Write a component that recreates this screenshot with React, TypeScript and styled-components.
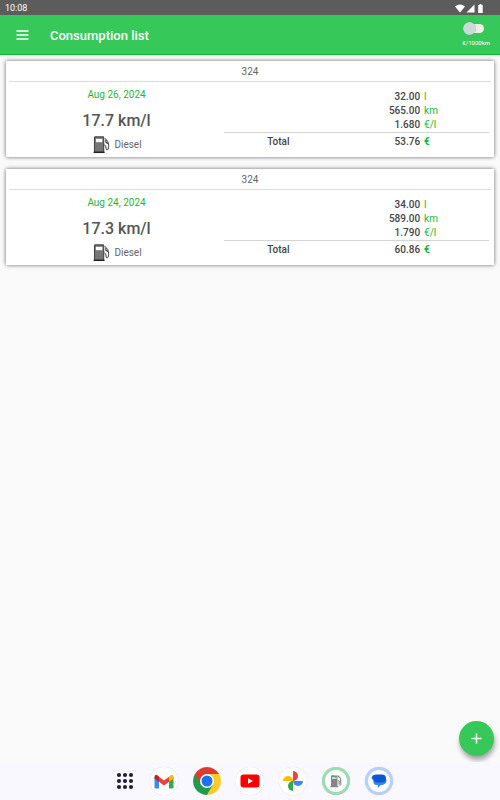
import React from "react";
import styled, { createGlobalStyle } from "styled-components";

const GlobalStyle = createGlobalStyle`
  * { box-sizing: border-box; }
  body {
    margin: 0;
    background: #fafafa;
    color: #555;
    font-family: Roboto, "Liberation Sans", sans-serif;
    font-size: 10px;
  }
`;

const Screen = styled.div`
  min-height: 100vh;
  display: flex;
  flex-direction: column;
`;

const StatusBar = styled.div`
  height: 15px;
  padding: 1px 16px 0 5px;
  display: flex;
  align-items: center;
  justify-content: space-between;
  background: #5c5c5c;
  color: #fff;
  font-size: 9px;
  line-height: 14px;
`;

const StatusIcons = styled.div`
  display: flex;
  align-items: center;
  gap: 1px;
`;

const AppBar = styled.header`
  height: 40px;
  padding: 0 10px 0 16px;
  display: flex;
  align-items: center;
  background: #36c95a;
  border-bottom: 1px solid #08bd26;
  color: #fff;
`;

const MenuButton = styled.button`
  display: flex;
  padding: 0;
  border: 0;
  background: none;
  color: inherit;
`;

const Title = styled.h1`
  flex: 1;
  margin: 0 0 0 21px;
  font-size: 13px;
  line-height: 16px;
  font-weight: 500;
  padding-top: 2px;
`;

const UnitSwitch = styled.label`
  display: flex;
  flex-direction: column;
  align-items: center;
  gap: 4px;
  font-size: 6px;
  line-height: 8px;
  padding-bottom: 1px;
`;

const SwitchInput = styled.input`
  appearance: none;
  display: flex;
  align-items: center;
  width: 18px;
  height: 9px;
  margin: 3px 2px 2px 0;
  border-radius: 5px;
  background: #eeeee6;

  &::before {
    content: "";
    flex: none;
    width: 13px;
    height: 13px;
    margin-left: -3px;
    border-radius: 50%;
    background: #c9dad8;
    box-shadow: 0 0 1px rgba(0, 0, 0, 0.3);
  }
  &:checked { justify-content: flex-end; }
`;

const Main = styled.main`
  position: relative;
  flex: 1;
  padding: 6px;
  overflow: hidden;
`;

const List = styled.div`
  display: flex;
  flex-direction: column;
  gap: 12px;
`;

const Card = styled.article`
  padding: 0 3px 3px;
  background: #fff;
  box-shadow: 0 0 4px rgba(0, 0, 0, 0.6);
`;

const CardTitle = styled.h2`
  margin: 0;
  height: 21px;
  border-bottom: 1px solid #dcdcdc;
  text-align: center;
  font-size: 10px;
  line-height: 21px;
  font-weight: 400;
  color: #666;
`;

const CardBody = styled.div`
  display: grid;
  grid-template-columns: 215fr 267fr;
`;

const Summary = styled.div`
  display: flex;
  flex-direction: column;
  align-items: center;
  padding-top: 6px;
`;

const FillDate = styled.time`
  color: #1bb92f;
  line-height: 14px;
`;

const Average = styled.strong`
  margin-top: 9px;
  font-size: 16px;
  line-height: 20px;
  font-weight: 500;
  color: #555;
`;

const Fuel = styled.div`
  display: flex;
  align-items: center;
  gap: 4px;
  margin-top: 5px;
  padding-left: 2px;
  line-height: 18px;
  color: #666;
`;

const Details = styled.table`
  align-self: start;
  margin: 8px 2px 0 0;
  border-collapse: collapse;
  table-layout: fixed;
  color: #444;
`;

const Cell = styled.td<{ $total?: boolean }>`
  padding: ${(p) => (p.$total ? "1px 0 0" : "0")};
  border-top: ${(p) => (p.$total ? "1px solid #d4d4d4" : "0")};
  text-align: right;
  font-weight: 500;
  line-height: ${(p) => (p.$total ? "15px" : "14px")};
`;

const UnitCell = styled(Cell)`
  padding-left: 4px;
  text-align: left;
  font-weight: ${(p) => (p.$total ? 700 : 400)};
  color: #12bd2d;
`;

const TotalLabel = styled.th`
  padding: 1px 0 0;
  border-top: 1px solid #d4d4d4;
  font-weight: 500;
  line-height: 15px;
`;

const LabelCol = styled.col` width: 41%; `;
const ValueCol = styled.col` width: 33%; `;

const AddButton = styled.button`
  position: absolute;
  right: 6px;
  bottom: 6px;
  width: 35px;
  height: 35px;
  padding: 0;
  display: grid;
  place-items: center;
  border: 0;
  border-radius: 50%;
  background: #36c95a;
  color: #fff;
  box-shadow: 1px 4px 5px rgba(0, 0, 0, 0.35);
`;

const Dock = styled.nav`
  height: 38px;
  display: flex;
  align-items: center;
  justify-content: center;
  gap: 15px;
  padding-left: 8px;
  background: #f9f8ff;
`;

const DockButton = styled.button<{ $ring?: string; $plain?: boolean }>`
  width: ${(p) => (p.$plain ? "20px" : "28px")};
  height: 28px;
  padding: 0;
  display: grid;
  place-items: center;
  border: ${(p) => (p.$ring ? `3px solid ${p.$ring}` : "0")};
  border-radius: 50%;
  background: ${(p) => (p.$plain ? "none" : "#fff")};
  box-shadow: ${(p) => (p.$plain ? "none" : "0 0 1px rgba(0, 0, 0, 0.2)")};
`;

const WifiIcon = () => (
  <svg width="10" height="9" viewBox="0 0 10 9" aria-hidden="true">
    <path d="M0 2.5Q5-1.5 10 2.5L5 8.5Z" fill="#fff" />
  </svg>
);

const SignalIcon = () => (
  <svg width="9" height="9" viewBox="0 0 9 9" aria-hidden="true">
    <path d="M8.5.5v8H.5Z" fill="#fff" />
  </svg>
);

const BatteryIcon = () => (
  <svg width="8" height="9" viewBox="0 0 8 9" aria-hidden="true">
    <path d="M3.5 0h2v1h1.2v8H2.2V1h1.3Z" fill="#fff" />
  </svg>
);

const MenuIcon = () => (
  <svg width="13" height="10" viewBox="0 0 13 10" aria-hidden="true">
    <path d="M.5 1h12M.5 5h12M.5 9h12" stroke="#fff" strokeWidth="1.3" />
  </svg>
);

const PlusIcon = () => (
  <svg width="11" height="11" viewBox="0 0 11 11" aria-hidden="true">
    <path d="M5.5.5v10M.5 5.5h10" stroke="#fff" strokeWidth="1.5" />
  </svg>
);

const PumpIcon = () => (
  <svg width="17" height="18" viewBox="0 0 17 18" aria-hidden="true">
    <path d="M1.5 1.5Q1.5.9 2.3.9H9.8Q10.7.9 10.7 1.8V16H1.5Z" fill="#777" stroke="#444" strokeWidth="1.1" />
    <path d="M2.9 2.8H9.3V6.2H2.9Z" fill="#fff" />
    <path d="M.6 16.4H11.6" stroke="#222" strokeWidth="1.3" />
    <path d="M11.8 2.1 14.6 5.4Q15.8 7.5 15.7 10.2L15.2 13Q14.2 15 13.3 13.5L12.7 9.8 11.2 8.8" fill="none" stroke="#444" strokeWidth="1" />
    <path d="M12.9 3.8V6.2L15.2 7.8" fill="none" stroke="#333" strokeWidth="1.1" />
  </svg>
);

const AppsIcon = () => (
  <svg width="18" height="18" viewBox="0 0 18 18" aria-hidden="true">
    {[3, 9, 15].map((y) =>
      [3, 9, 15].map((x) => <circle key={`${x}-${y}`} cx={x} cy={y} r="2.1" fill="#202033" />)
    )}
  </svg>
);

const GmailIcon = () => (
  <svg width="20" height="15" viewBox="0 0 20 15" aria-hidden="true">
    <path d="M.5 3v10.2Q.5 14.5 1.8 14.5H5V6Z" fill="#4285f4" />
    <path d="M15 6v8.5h3.2q1.3 0 1.3-1.3V3Z" fill="#34a853" />
    <path d="M5 2.8 10 6.5l5-3.7v5L10 11.5 5 7.8Z" fill="#ea4335" />
    <path d="M.5 3Q.7.4 3 .9L5 2.5v5.3L.5 4.5Z" fill="#c5221f" />
    <path d="M19.5 3Q19.3.4 17 .9L15 2.5v5.3l4.5-3.3Z" fill="#fbbc04" />
  </svg>
);

const ChromeIcon = () => (
  <svg width="28" height="28" viewBox="0 0 28 28" aria-hidden="true">
    <path d="M14 7h12.1A14 14 0 0 1 14 28l6.1-10.5Z" fill="#ffc928" />
    <path d="M1.9 7A14 14 0 0 0 14 28l6.1-10.5H14Z" fill="#229a4c" />
    <path d="M1.9 7A14 14 0 0 1 26.1 7H14L7.9 17.5Z" fill="#dc3b2e" />
    <circle cx="14" cy="14" r="7" fill="#fff" />
    <circle cx="14" cy="14" r="5.5" fill="#1a73e8" />
  </svg>
);

const YouTubeIcon = () => (
  <svg width="20" height="14" viewBox="0 0 20 14" aria-hidden="true">
    <rect x=".5" y=".5" width="19" height="13" rx="3" fill="#f00" />
    <path d="m8 4.3 5 2.7-5 2.7Z" fill="#fff" />
  </svg>
);

const PhotosIcon = () => (
  <svg width="20" height="20" viewBox="0 0 20 20" aria-hidden="true">
    <path d="M10 0a5 5 0 0 1 0 10Z" fill="#ea4335" />
    <path d="M20 10a5 5 0 0 1-10 0Z" fill="#4285f4" />
    <path d="M10 20a5 5 0 0 1 0-10Z" fill="#34a853" />
    <path d="M0 10a5 5 0 0 1 10 0Z" fill="#fbbc04" />
  </svg>
);

const FuelAppIcon = () => (
  <svg width="12" height="14" viewBox="0 0 12 14" aria-hidden="true">
    <path d="M1 1.5h6.5V12H8.3v1.2H.3V12H1Z" fill="#858585" />
    <path d="M2 4h4.6" stroke="#e4eee5" strokeWidth="1.6" />
    <path d="M1.5 2.5q2-2 3 0t3-.5" fill="none" stroke="#35b957" />
    <path d="m8 2 2.5 2.8.4 5.7q-.9 2-1.7 0V7L8 6.5" fill="none" stroke="#777" />
    <path d="m8.5 1.5 2 2.2.5 2.8" fill="none" stroke="#55bd6d" strokeDasharray="1.5 1" />
  </svg>
);

const MessagesIcon = () => (
  <svg width="16" height="16" viewBox="0 0 16 16" aria-hidden="true">
    <path d="M.5 5.5Q2 3.5 5 4h6.5Q15.5 4.5 15.5 7.5T11.5 12H9.8L6.8 15V12H5.5Q2.4 12 2.4 9V7.6Z" fill="#3f83f3" />
    <path d="M.6 4.8Q1.6 1.5 5.5 1.5h5.2Q15 1.5 15 5.5T10.7 9.6H6.8Q2.8 9.6 2.6 6.2Z" fill="#0b57d0" />
  </svg>
);

interface Entry {
  vehicle: string;
  iso: string;
  date: string;
  average: string;
  rows: [string, string][];
  total: string;
}

const entries: Entry[] = [
  {
    vehicle: "324",
    iso: "2024-08-26",
    date: "Aug 26, 2024",
    average: "17.7 km/l",
    rows: [["32.00", "l"], ["565.00", "km"], ["1.680", "€/l"]],
    total: "53.76",
  },
  {
    vehicle: "324",
    iso: "2024-08-24",
    date: "Aug 24, 2024",
    average: "17.3 km/l",
    rows: [["34.00", "l"], ["589.00", "km"], ["1.790", "€/l"]],
    total: "60.86",
  },
];

const ConsumptionCard = ({ entry }: { entry: Entry }) => (
  <Card>
    <CardTitle>{entry.vehicle}</CardTitle>
    <CardBody>
      <Summary>
        <FillDate dateTime={entry.iso}>{entry.date}</FillDate>
        <Average>{entry.average}</Average>
        <Fuel>
          <PumpIcon />
          Diesel
        </Fuel>
      </Summary>
      <Details>
        <colgroup>
          <LabelCol />
          <ValueCol />
          <col />
        </colgroup>
        <tbody>
          {entry.rows.map(([value, unit]) => (
            <tr key={unit}>
              <Cell />
              <Cell>{value}</Cell>
              <UnitCell>{unit}</UnitCell>
            </tr>
          ))}
          <tr>
            <TotalLabel scope="row">Total</TotalLabel>
            <Cell $total>{entry.total}</Cell>
            <UnitCell $total>€</UnitCell>
          </tr>
        </tbody>
      </Details>
    </CardBody>
  </Card>
);

export default function App() {
  return (
    <Screen>
      <GlobalStyle />
      <StatusBar>
        <span>10:08</span>
        <StatusIcons>
          <WifiIcon />
          <SignalIcon />
          <BatteryIcon />
        </StatusIcons>
      </StatusBar>
      <AppBar>
        <MenuButton aria-label="Menu"><MenuIcon /></MenuButton>
        <Title>Consumption list</Title>
        <UnitSwitch>
          <SwitchInput type="checkbox" />
          €/1000km
        </UnitSwitch>
      </AppBar>
      <Main>
        <List>
          {entries.map((entry) => <ConsumptionCard key={entry.iso} entry={entry} />)}
        </List>
        <AddButton aria-label="Add consumption"><PlusIcon /></AddButton>
      </Main>
      <Dock aria-label="Apps">
        <DockButton $plain aria-label="All apps"><AppsIcon /></DockButton>
        <DockButton aria-label="Gmail"><GmailIcon /></DockButton>
        <DockButton aria-label="Chrome"><ChromeIcon /></DockButton>
        <DockButton aria-label="YouTube"><YouTubeIcon /></DockButton>
        <DockButton aria-label="Photos"><PhotosIcon /></DockButton>
        <DockButton $ring="#9bddb0" aria-label="Fuel log"><FuelAppIcon /></DockButton>
        <DockButton $ring="#b5d0fa" aria-label="Messages"><MessagesIcon /></DockButton>
      </Dock>
    </Screen>
  );
}
